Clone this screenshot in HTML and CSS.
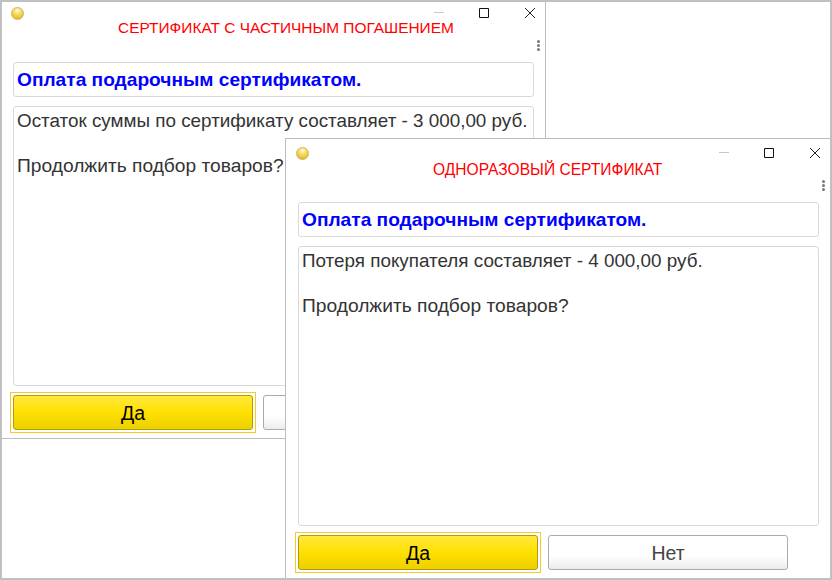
FILE: index.html
```html
<!DOCTYPE html>
<html lang="ru">
<head>
<meta charset="utf-8">
<title>Сертификаты</title>
<link rel="stylesheet" href="styles.css">
</head>
<body>
<section class="window window-back">
  <header class="titlebar">
    <span class="orb"></span>
    <div class="controls">
      <svg class="ctl" width="14" height="14" viewBox="0 0 14 14"><path d="M3 6.5H13" stroke="#c8c8c8" fill="none"/></svg>
      <svg class="ctl" width="14" height="14" viewBox="0 0 14 14"><path d="M2.5 2.5H11.5V11.5H2.5Z" stroke="#111" fill="none"/></svg>
      <svg class="ctl" width="14" height="14" viewBox="0 0 14 14"><path d="M2 2L12 12M12 2L2 12" stroke="#222" fill="none"/></svg>
    </div>
  </header>
  <h1 class="caption caption-back">СЕРТИФИКАТ С ЧАСТИЧНЫМ ПОГАШЕНИЕМ</h1>
  <div class="more"><i></i><i></i><i></i></div>
  <div class="panel heading">Оплата подарочным сертификатом.</div>
  <div class="panel message">
    <p>Остаток суммы по сертификату составляет - 3 000,00 руб.</p>
    <p class="ask">Продолжить подбор товаров?</p>
  </div>
  <footer class="actions">
    <button class="btn btn-primary">Да</button>
    <button class="btn">Нет</button>
  </footer>
</section>
<section class="window window-front">
  <header class="titlebar">
    <span class="orb"></span>
    <div class="controls">
      <svg class="ctl" width="14" height="14" viewBox="0 0 14 14"><path d="M3 6.5H13" stroke="#c8c8c8" fill="none"/></svg>
      <svg class="ctl" width="14" height="14" viewBox="0 0 14 14"><path d="M2.5 2.5H11.5V11.5H2.5Z" stroke="#111" fill="none"/></svg>
      <svg class="ctl" width="14" height="14" viewBox="0 0 14 14"><path d="M2 2L12 12M12 2L2 12" stroke="#222" fill="none"/></svg>
    </div>
  </header>
  <h1 class="caption caption-front">ОДНОРАЗОВЫЙ СЕРТИФИКАТ</h1>
  <div class="more"><i></i><i></i><i></i></div>
  <div class="panel heading">Оплата подарочным сертификатом.</div>
  <div class="panel message">
    <p>Потеря покупателя составляет - 4 000,00 руб.</p>
    <p class="ask">Продолжить подбор товаров?</p>
  </div>
  <footer class="actions">
    <button class="btn btn-primary">Да</button>
    <button class="btn">Нет</button>
  </footer>
</section>
</body>
</html>
```
FILE: styles.css
```css
html, body {
  margin: 0;
  height: 100%;
  background: #fff;
  overflow: hidden;
}
body {
  position: relative;
  font-family: "Liberation Sans", Arial, sans-serif;
  color: #333;
}
body::after {
  content: "";
  position: absolute;
  inset: 0;
  border: 2px solid #c0c0c0;
  pointer-events: none;
}
.window {
  position: absolute;
  box-sizing: border-box;
  width: 546px;
  height: 441px;
  display: flex;
  flex-direction: column;
  padding: 0 11px 0 12px;
  background: #fff;
  border: 1px solid #bdbdbd;
}
.window-back { left: 0; top: -2px; }
.window-front { left: 285px; top: 138px; }
.titlebar {
  display: flex;
  justify-content: space-between;
  height: 19px;
  margin: 0 -11px 0 -12px;
  padding: 7px 8px 0 10px;
  box-sizing: border-box;
}
.orb {
  width: 13px;
  height: 13px;
  margin-top: 1px;
  border-radius: 50%;
  box-sizing: border-box;
  border: 1px solid #cdb262;
  background: radial-gradient(circle at 50% 25%, #fffbe0 0, #f8e070 32%, #eec52f 68%, #cfa63c 100%);
}
.controls {
  display: flex;
  gap: 32px;
  height: 14px;
}
.ctl { display: block; }
.caption {
  margin: 0;
  height: 22px;
  font-size: 15.45px;
  font-weight: 400;
  line-height: 20px;
  color: #f00;
  white-space: nowrap;
}
.caption-back { padding-left: 105px; }
.caption-front {
  padding-left: 135px;
  font-size: 15.6px;
  line-height: 24px;
}
.more {
  display: flex;
  flex-direction: column;
  align-items: flex-end;
  gap: 1px;
  height: 22px;
  margin-right: -6px;
}
.more i {
  width: 3px;
  height: 3px;
  background: #777;
  border-radius: 50%;
}
.panel {
  box-sizing: border-box;
  border: 1px solid #d9d9d9;
  border-radius: 3px;
  padding: 0 3px;
  background: #fff;
}
.heading {
  height: 35px;
  font-size: 19.15px;
  font-weight: 700;
  line-height: 34px;
  color: #00f;
  margin-bottom: 9px;
  white-space: nowrap;
}
.message {
  flex: 1;
  font-size: 18.85px;
  line-height: 22px;
  color: #333;
  padding-top: 3px;
}
.message p { margin: 0 0 23px; white-space: nowrap; }
.message .ask { font-size: 19.2px; }
.actions {
  display: flex;
  gap: 10px;
  padding: 9px 0 8px;
}
.btn {
  position: relative;
  width: 240px;
  height: 35px;
  padding: 1px 0 0;
  border: 1px solid #ababab;
  border-radius: 3px;
  background: linear-gradient(#fff 0, #fff 60%, #ececec 100%);
  font: 19.5px "Liberation Sans", Arial, sans-serif;
  color: #444;
}
.btn-primary {
  border-color: #b39b00;
  background: linear-gradient(#ffe93d 0, #ffe000 50%, #ecd000 100%);
  color: #000;
}
.btn-primary::after {
  content: "";
  position: absolute;
  inset: -4px;
  border: 1px solid #f5c92e;
}
```
